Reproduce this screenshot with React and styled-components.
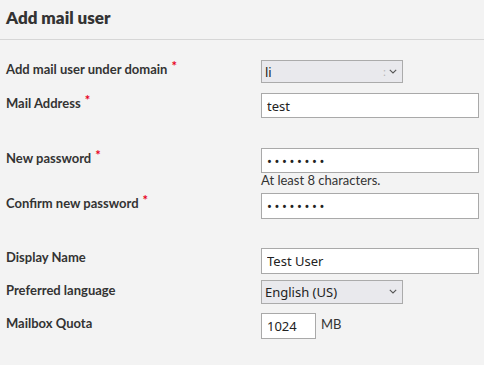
import styled, { createGlobalStyle } from "styled-components";

const GlobalStyle = createGlobalStyle`
  html, body {
    margin: 0;
    padding: 0;
    background: #f3f3f3;
  }
  body {
    font-family: Lato, "Noto Sans", sans-serif;
    color: #333;
  }
`;

const Page = styled.div`
  width: 484px;
  height: 365px;
  background: #f3f3f3;
  overflow: hidden;
`;

const Header = styled.h1`
  margin: 0;
  height: 40px;
  box-sizing: border-box;
  padding: 7px 6px 0;
  font-size: 17px;
  font-weight: 800;
  line-height: 22px;
  color: #333;
  border-bottom: 1px solid #d6d6d6;
`;

const Form = styled.form`
  padding: 20px 0 0 6px;
`;

const Row = styled.div`
  display: flex;
  align-items: flex-start;
  margin-bottom: ${(p) => p.$gap}px;
`;

const Label = styled.label`
  width: 255px;
  flex: none;
  padding-top: ${(p) => p.$top || 2}px;
  font-size: 13px;
  font-weight: 700;
  line-height: 16px;
  color: #333;
`;

const Star = styled.span`
  color: #e8001c;
  margin-left: 4px;
  position: relative;
  top: -3px;
  font-size: 13px;
`;

const Field = styled.div`
  display: flex;
  flex-direction: column;
  align-items: flex-start;
`;

const Input = styled.input`
  box-sizing: border-box;
  width: ${(p) => p.$w || 218}px;
  height: ${(p) => p.$h || 25}px;
  margin: 0;
  padding: 0 5px;
  border: 1px solid #a9a9a9;
  border-radius: 0;
  background: #fff;
  font-family: "Noto Sans", sans-serif;
  font-size: 13px;
  color: #222;
  outline: none;
  letter-spacing: ${(p) => (p.type === "password" ? "2.6px" : "0")};
`;

const Hint = styled.div`
  font-size: 13px;
  line-height: 14px;
  height: 14px;
  color: #333;
  font-weight: 400;
`;

const SelectWrap = styled.div`
  position: relative;
  width: 142px;
  height: ${(p) => p.$h}px;
`;

const Select = styled.select`
  appearance: none;
  box-sizing: border-box;
  width: 100%;
  height: 100%;
  margin: 0;
  padding: 0 0 0 3px;
  border: 1px solid #ababab;
  border-radius: 0;
  background: #e9e9ed;
  font-family: "Noto Sans", sans-serif;
  font-size: 13px;
  color: #222;
  outline: none;
`;

const Chevron = styled.svg`
  position: absolute;
  right: 6px;
  top: 50%;
  margin-top: -3px;
  pointer-events: none;
`;

const Faint = styled.span`
  position: absolute;
  right: 17px;
  top: 4px;
  font-size: 11px;
  color: #b5b5b5;
  pointer-events: none;
  font-family: "Noto Sans", sans-serif;
`;

const Inline = styled.div`
  display: flex;
  align-items: flex-start;
  gap: 5px;
`;

const Unit = styled.span`
  font-size: 13px;
  line-height: 16px;
  padding-top: 3px;
  color: #333;
`;

const Arrow = () => (
  <Chevron width="8" height="5" viewBox="0 0 8 5">
    <path d="M0.8 0.8 L4 4 L7.2 0.8" fill="none" stroke="#555" strokeWidth="1.1" />
  </Chevron>
);

export default function App() {
  return (
    <Page>
      <GlobalStyle />
      <Header>Add mail user</Header>
      <Form onSubmit={(e) => e.preventDefault()}>
        <Row $gap={10}>
          <Label $top={1}>
            Add mail user under domain<Star>*</Star>
          </Label>
          <Field>
            <SelectWrap $h={23}>
              <Select defaultValue="li">
                <option value="li">li</option>
              </Select>
              <Faint>:</Faint>
              <Arrow />
            </SelectWrap>
          </Field>
        </Row>
        <Row $gap={30}>
          <Label>
            Mail Address<Star>*</Star>
          </Label>
          <Field>
            <Input defaultValue="test" />
          </Field>
        </Row>
        <Row $gap={6}>
          <Label>
            New password<Star>*</Star>
          </Label>
          <Field>
            <Input type="password" defaultValue="12345678" />
            <Hint>At least 8 characters.</Hint>
          </Field>
        </Row>
        <Row $gap={29}>
          <Label>
            Confirm new password<Star>*</Star>
          </Label>
          <Field>
            <Input type="password" $h={26} defaultValue="12345678" />
          </Field>
        </Row>
        <Row $gap={6}>
          <Label $top={1}>Display Name</Label>
          <Field>
            <Input $h={26} defaultValue="Test User" />
          </Field>
        </Row>
        <Row $gap={9}>
          <Label $top={2}>Preferred language</Label>
          <Field>
            <SelectWrap $h={24}>
              <Select defaultValue="en_US">
                <option value="en_US">English (US)</option>
              </Select>
              <Arrow />
            </SelectWrap>
          </Field>
        </Row>
        <Row $gap={0}>
          <Label $top={2}>Mailbox Quota</Label>
          <Inline>
            <Input $w={55} $h={26} defaultValue="1024" />
            <Unit>MB</Unit>
          </Inline>
        </Row>
      </Form>
    </Page>
  );
}
